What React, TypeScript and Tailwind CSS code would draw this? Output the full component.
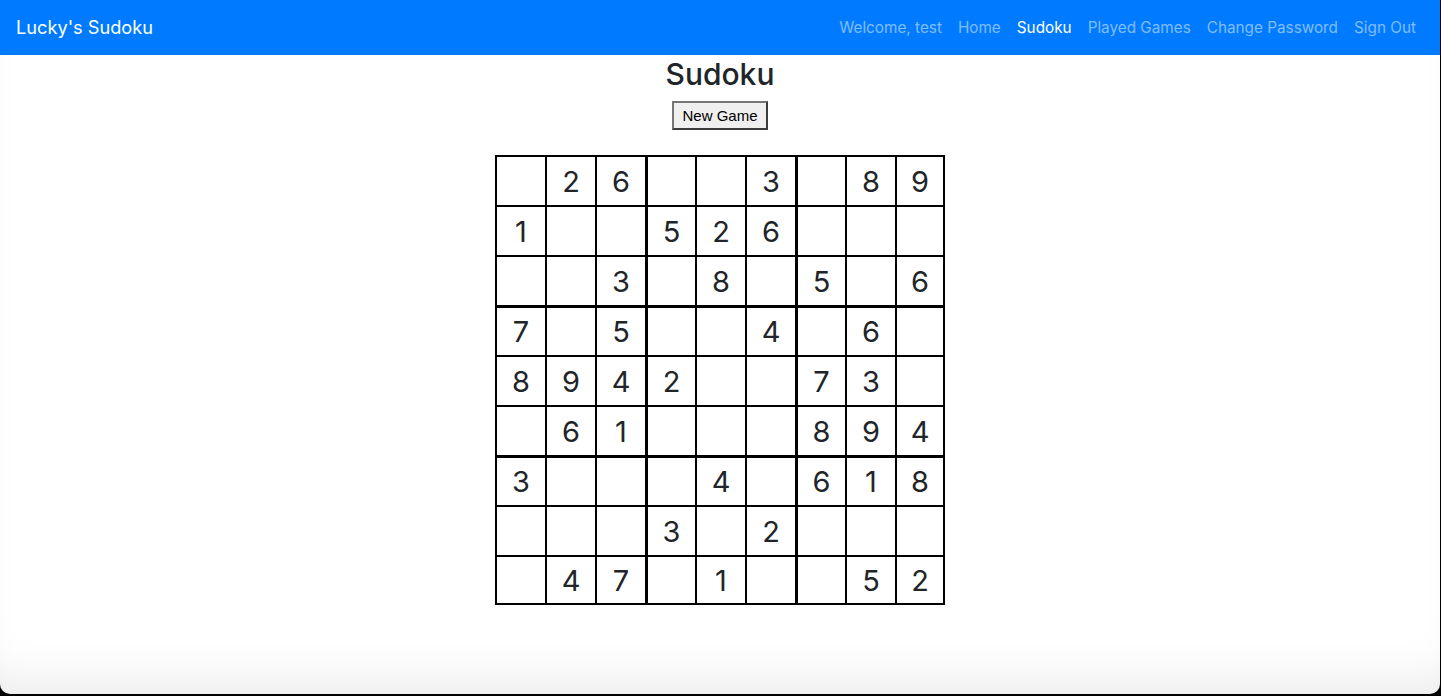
const board: (number | null)[][] = [
  [null, 2, 6, null, null, 3, null, 8, 9],
  [1, null, null, 5, 2, 6, null, null, null],
  [null, null, 3, null, 8, null, 5, null, 6],
  [7, null, 5, null, null, 4, null, 6, null],
  [8, 9, 4, 2, null, null, 7, 3, null],
  [null, 6, 1, null, null, null, 8, 9, 4],
  [3, null, null, null, 4, null, 6, 1, 8],
  [null, null, null, 3, null, 2, null, null, null],
  [null, 4, 7, null, 1, null, null, 5, 2],
];

const links = [
  { label: 'Welcome, test', active: false },
  { label: 'Home', active: false },
  { label: 'Sudoku', active: true },
  { label: 'Played Games', active: false },
  { label: 'Change Password', active: false },
  { label: 'Sign Out', active: false },
];

function Cell({ value, row, col }: { value: number | null; row: number; col: number }) {
  const left = col % 3 === 0 && col > 0 ? 'border-l-[3px]' : 'border-l-2';
  const top = row % 3 === 0 && row > 0 ? 'border-t-[3px]' : 'border-t-2';
  const right = col === 8 ? 'border-r-2' : '';
  const bottom = row === 8 ? 'border-b-2' : '';
  return (
    <div
      className={`h-[50px] flex items-center justify-center border-black ${left} ${top} ${right} ${bottom} text-[29px] text-[#212529] leading-none`}
    >
      {value ?? ''}
    </div>
  );
}

export default function App() {
  return (
    <div className="h-[696px] w-full bg-black font-['Inter',sans-serif]">
      <div className="h-[694px] w-[1440px] bg-white rounded-b-[10px] overflow-hidden shadow-[inset_0_-40px_50px_-30px_rgba(0,0,0,0.09)] flex flex-col">
        {/* Navbar */}
        <nav className="h-[55px] bg-[#007bff] flex items-center justify-between px-4 pt-[1px]">
          <span className="text-white text-[18.2px]">Lucky's Sudoku</span>
          <ul className="flex items-center">
            {links.map(l => (
              <li
                key={l.label}
                className={`px-2 text-[15.3px] ${l.active ? 'text-white' : 'text-white/50'}`}
              >
                {l.label}
              </li>
            ))}
          </ul>
        </nav>

        {/* Main */}
        <main className="flex flex-col items-center">
          <h2 className="text-[30px] font-medium text-[#212529] leading-[38px] mb-2">Sudoku</h2>
          <button className="h-[29px] px-2 bg-[#efefef] border-2 border-t-[#767676] border-l-[#767676] border-r-[#3b3b3b] border-b-[#3b3b3b] text-[15px] text-black font-['Liberation_Sans',sans-serif] leading-none">
            New Game
          </button>
          <div className="mt-[25px] grid grid-cols-[repeat(9,50px)]">
            {board.map((row, r) =>
              row.map((v, c) => <Cell key={`${r}-${c}`} value={v} row={r} col={c} />)
            )}
          </div>
        </main>
      </div>
    </div>
  );
}
